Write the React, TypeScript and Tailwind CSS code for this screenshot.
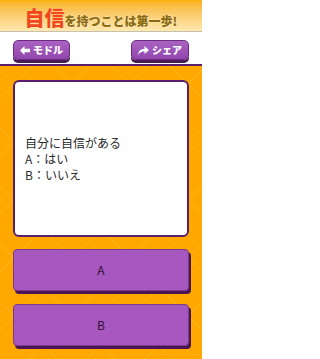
import React from "react";

const jp = "font-['Noto_Sans_CJK_JP','Noto_Sans',sans-serif]";

const BackIcon = () => (
  <svg width="10" height="9" viewBox="0 0 10 9" className="shrink-0">
    <path d="M0 4.5 L4.5 0 V2.8 H10 V6.2 H4.5 V9 Z" fill="white" />
  </svg>
);

const ShareIcon = () => (
  <svg width="11" height="9" viewBox="0 0 11 9" className="shrink-0">
    <path d="M0 9 C0.5 4.5 3 3 6.5 3 V0 L11 4 L6.5 8 V5.2 C3.8 5.2 1.8 6.3 0 9 Z" fill="white" />
  </svg>
);

const TopButton = ({ icon, label }: { icon: React.ReactNode; label: string }) => (
  <button
    className={`flex h-[20px] items-center justify-center gap-[3px] rounded-[5px] border border-[#6a2a80] bg-gradient-to-b from-[#a963c2] to-[#9246ad] px-[6px] text-[10px] font-black leading-none text-white shadow-[0_3px_0_#4b1858] ${jp}`}
  >
    {icon}
    <span>{label}</span>
  </button>
);

const AnswerButton = ({ label }: { label: string }) => (
  <button
    className={`flex h-[42px] w-full items-center justify-center rounded-[4px] border border-[#7a3b8f] bg-[#a658bf] text-[12px] text-[#2e1035] shadow-[2px_3px_0_#4a1552] ${jp}`}
  >
    {label}
  </button>
);

export default function App() {
  return (
    <div className="flex h-[359px] w-[202px] flex-col overflow-hidden bg-[#ffa800]">
      {/* タイトル */}
      <div className="flex h-[31px] items-end justify-center bg-gradient-to-b from-[#f8b200] to-[#fde9ae] pb-[3px]">
        <span
          className={`text-[20px] font-black leading-none text-[#f2461c] [text-shadow:0_0_1px_#fff3c0] ${jp}`}
        >
          自信
        </span>
        <span
          className={`mb-[1px] text-[12px] font-black leading-none text-[#8a6a12] [text-shadow:0_0_2px_#fff6d0] ${jp}`}
        >
          を持つことは第一歩!
        </span>
      </div>
      <div className="h-[1px] bg-[#c9bfae]" />

      {/* ナビ */}
      <div className="flex h-[32px] items-start justify-between bg-white px-[13px] pt-[8px]">
        <TopButton icon={<BackIcon />} label="モドル" />
        <TopButton icon={<ShareIcon />} label="シェア" />
      </div>
      <div className="h-[2px] bg-[#5a1e6a]" />

      {/* 本文 */}
      <div className="flex flex-1 flex-col px-[13px] pt-[14px] [background-image:repeating-linear-gradient(45deg,transparent_0_40px,rgba(255,225,150,0.25)_40px_41px),repeating-linear-gradient(-45deg,transparent_0_40px,rgba(255,225,150,0.25)_40px_41px)]">
        <div
          className={`flex h-[157px] w-[176px] flex-col justify-center rounded-[6px] border-2 border-[#5a1f6a] bg-white pl-[10px] text-[12px] leading-[16px] text-[#2a2a2a] ${jp}`}
        >
          <p>自分に自信がある</p>
          <p>A：はい</p>
          <p>B：いいえ</p>
        </div>
        <div className="mt-[12px] flex w-[176px] flex-col gap-[13px]">
          <AnswerButton label="A" />
          <AnswerButton label="B" />
        </div>
      </div>
    </div>
  );
}
